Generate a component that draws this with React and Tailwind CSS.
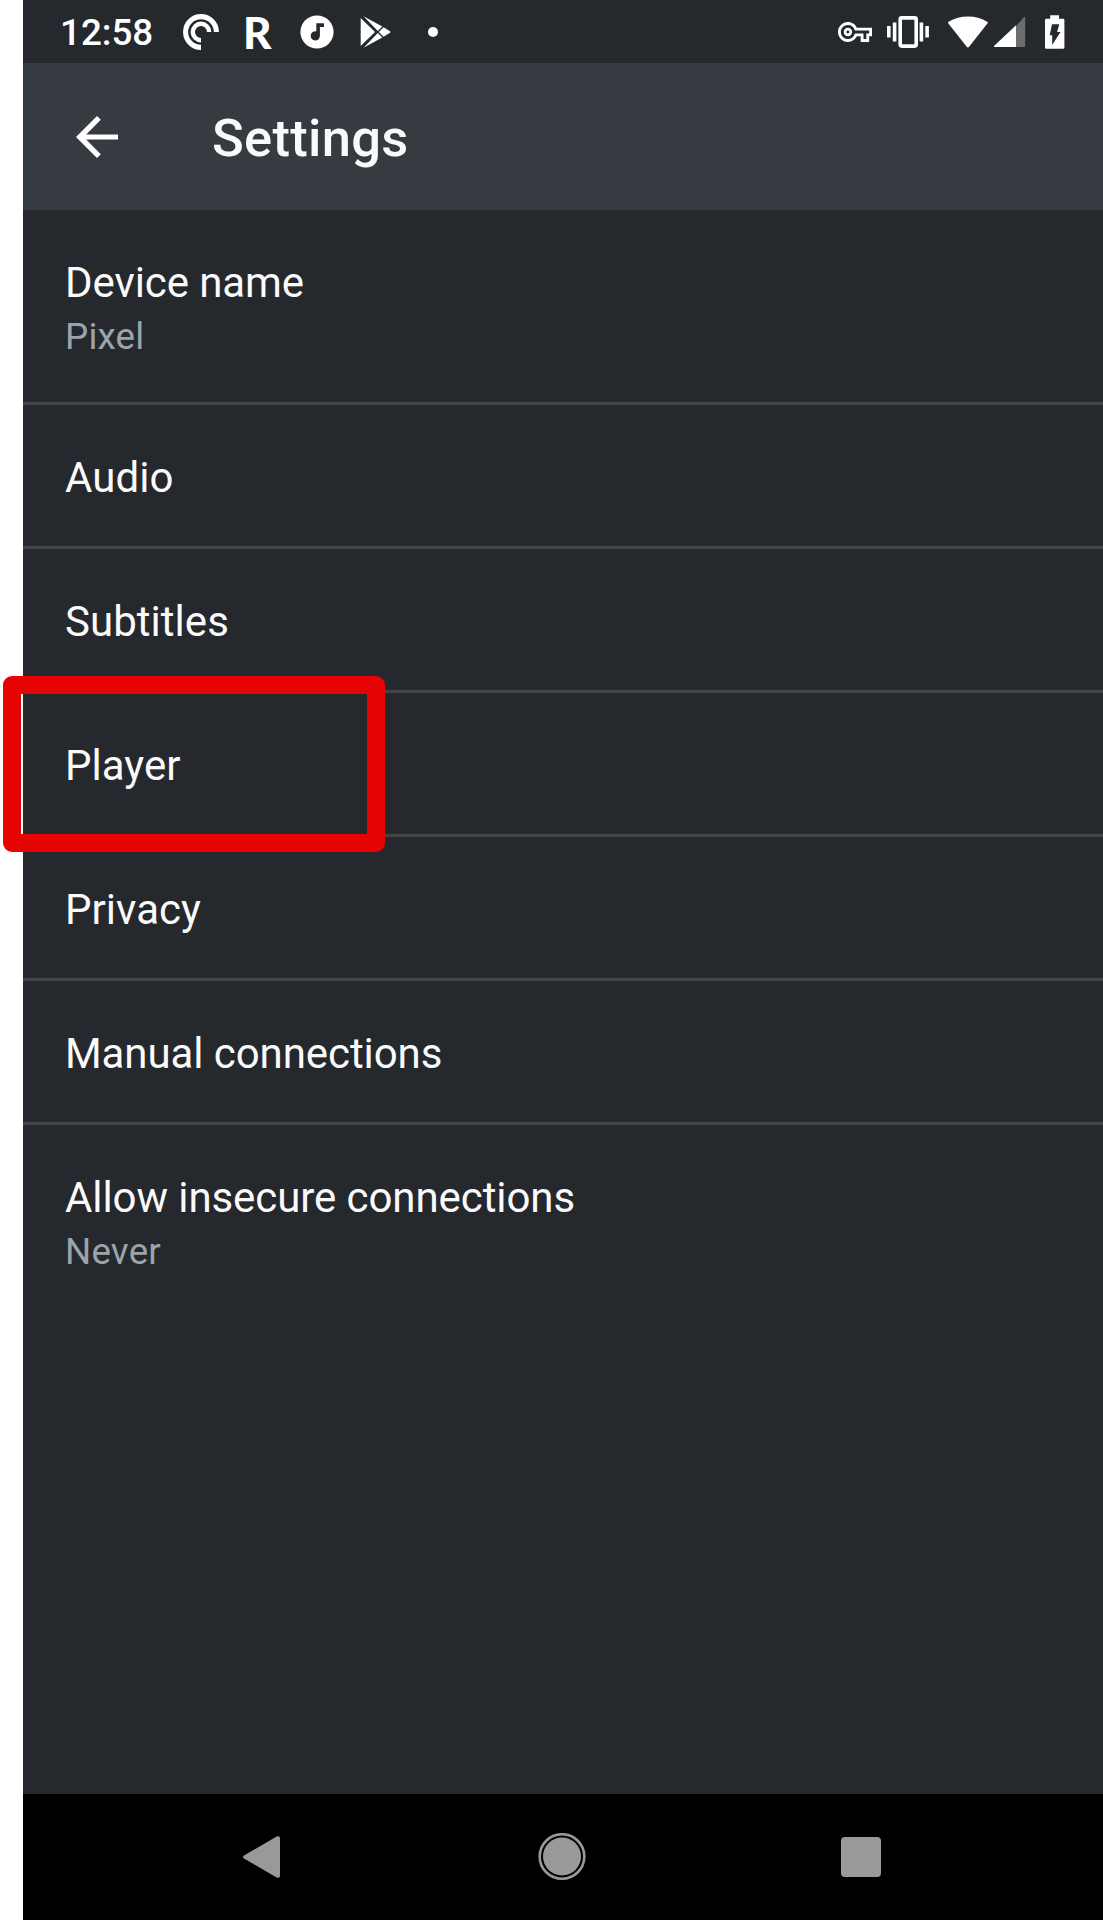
const rows = [
  { title: 'Device name', subtitle: 'Pixel' },
  { title: 'Audio' },
  { title: 'Subtitles' },
  { title: 'Player', highlighted: true },
  { title: 'Privacy' },
  { title: 'Manual connections' },
  { title: 'Allow insecure connections', subtitle: 'Never', last: true },
];

function PocketCastsIcon() {
  return (
    <svg className="ml-[29px] h-[38px] w-[38px] shrink-0" viewBox="0 0 38 38" fill="none" stroke="#fff">
      <path d="M34.4 19A15.4 15.4 0 1 0 19 34.4" strokeWidth="5.1" />
      <path d="M27.2 19A8.2 8.2 0 1 0 19 27.2" strokeWidth="4.4" />
    </svg>
  );
}

function MusicIcon() {
  return (
    <svg className="ml-[25px] h-[34px] w-[34px] shrink-0" viewBox="0 0 34 34">
      <circle cx="17" cy="17" r="16.6" fill="#fff" />
      <path d="M16.3 8.3h7.7v3.6h-4.1v8.9a4.6 4.6 0 1 1-3.6-4.4z" fill="#25282c" />
    </svg>
  );
}

function PlayStoreIcon() {
  return (
    <svg className="ml-[26px] h-[34px] w-[31px] shrink-0" viewBox="0 0 31 34" fill="#fff">
      <path d="M.7 3v28L15 17z" />
      <path d="M3.5 1.2L22.3 11.4l-4.5 4.5z" />
      <path d="M3.5 32.8l18.8-10.2-4.5-4.5z" />
      <path d="M23.5 12.3l6.2 3.6q1.4 1.1 0 2.2l-6.2 3.6L18.8 17z" />
    </svg>
  );
}

function KeyIcon() {
  return (
    <svg className="h-[20px] w-[34px] shrink-0" viewBox="0 5 24 14" fill="#fff">
      <path d="M22 19h-6v-4h-2.68c-1.14 2.42-3.6 4-6.32 4-3.86 0-7-3.14-7-7s3.14-7 7-7c2.72 0 5.17 1.58 6.32 4H24v6h-2v4zm-4-2h2v-4h2v-2H11.94l-.23-.67C11.01 8.34 9.11 7 7 7c-2.76 0-5 2.24-5 5s2.24 5 5 5c2.11 0 4.01-1.34 4.71-3.33l.23-.67H18v4zM7 15c-1.65 0-3-1.35-3-3s1.35-3 3-3 3 1.35 3 3-1.35 3-3 3zm0-4c-.55 0-1 .45-1 1s.45 1 1 1 1-.45 1-1-.45-1-1-1z" />
    </svg>
  );
}

function VibrateIcon() {
  return (
    <svg className="ml-[14px] h-[32px] w-[44px] shrink-0" viewBox="0 0 44 32" fill="#fff">
      <rect x="1" y="10" width="3.6" height="11.5" />
      <rect x="6.8" y="6.5" width="3.6" height="19" />
      <rect x="33.6" y="6.5" width="3.6" height="19" />
      <rect x="39.3" y="10" width="3.6" height="11.5" />
      <rect x="14.2" y="1.9" width="16" height="28.2" rx="1.5" fill="none" stroke="#fff" strokeWidth="3.6" />
    </svg>
  );
}

function WifiIcon() {
  return (
    <svg className="ml-[17px] h-[32px] w-[42px] shrink-0" viewBox="0 0 42 32" fill="#fff">
      <path d="M1.2 7.3Q.5 6.4 1.6 5.7C13-1.3 29-1.3 40.2 5.7Q41.2 6.4 40.6 7.3L22.1 30.7Q20.9 32.2 19.7 30.7z" />
    </svg>
  );
}

function SignalIcon() {
  return (
    <svg className="ml-[5px] h-[32px] w-[32px] shrink-0" viewBox="0 0 32 32">
      <path d="M22 9.8L30 1.2Q31.2.2 31.2 1.8V29.8Q31.2 31 30 31H22z" fill="#6b6d70" />
      <path d="M22 9.2V31H1Q-.8 31 .3 29.7z" fill="#fff" />
    </svg>
  );
}

function BatteryIcon() {
  return (
    <svg className="ml-[19px] h-[34px] w-[20px] shrink-0" viewBox="0 0 20 34">
      <path d="M5.2.2H14V3.7H18Q19.4 3.7 19.4 5.1V32.4Q19.4 33.8 18 33.8H1.4Q0 33.8 0 32.4V5.1Q0 3.7 1.4 3.7H5.2z" fill="#fff" />
      <path d="M7 9.2h7.3l-2.2 7.8h3.4L7.2 30V20.3H4.7z" fill="#25282c" />
    </svg>
  );
}

function StatusBar() {
  return (
    <div className="flex h-[63px] shrink-0 items-center bg-[#25282c] pl-[37px] pr-[38px] text-white">
      <span className="w-[93px] pt-[2px] text-[36.75px] font-medium leading-[43px] whitespace-nowrap">12:58</span>
      <PocketCastsIcon />
      <span className="ml-[23px] w-[32px] font-[Lato] text-[44px] font-black leading-[46px]">R</span>
      <MusicIcon />
      <PlayStoreIcon />
      <span className="ml-[37px] h-[10px] w-[10px] rounded-full bg-white" />
      <div className="ml-auto flex items-center">
        <KeyIcon />
        <VibrateIcon />
        <WifiIcon />
        <SignalIcon />
        <BatteryIcon />
      </div>
    </div>
  );
}

function Header() {
  return (
    <header className="flex h-[147px] shrink-0 items-center bg-[#363a41] pl-[53px]">
      <svg className="h-[42px] w-[42px]" viewBox="0 0 42 42" fill="#fff">
        <path d="M42 18.4H10.2L24.8 3.7 21 0 0 21 21 42l3.8-3.7L10.2 23.6H42z" />
      </svg>
      <h1 className="ml-[94px] pt-[3px] text-[52.5px] font-medium leading-[62px] tracking-[0.3px] text-[#fafafa]">Settings</h1>
    </header>
  );
}

function Row({ title, subtitle, highlighted, last }) {
  return (
    <li
      className={
        'relative pl-[42px] pt-[48px] ' +
        (last ? '' : 'border-b-[3px] border-[#424448] ') +
        (subtitle ? 'h-[195px]' : 'h-[144px]')
      }
    >
      <p
        className={
          'text-[42px] leading-[49px] whitespace-nowrap text-[#fafafa] ' +
          (title.length > 10 ? 'tracking-[-0.08px]' : 'tracking-[0.04px]')
        }
      >
        {title}
      </p>
      {subtitle && (
        <p className="mt-[8px] text-[36.75px] leading-[43px] tracking-[0.2px] text-[#9aa5ab]">{subtitle}</p>
      )}
      {highlighted && (
        <div className="absolute -left-[20px] -top-[17px] h-[176px] w-[382px] rounded-[9px] bg-transparent border-[18px] border-[#e60303]" />
      )}
    </li>
  );
}

function NavBar() {
  return (
    <nav className="flex h-[126px] shrink-0 items-center bg-black text-[#999]">
      <svg className="ml-[219px] h-[44px] w-[39px]" viewBox="0 0 39 44" fill="currentColor">
        <path d="M2 20.6L34.6 1.5Q38 .2 38 3.5V40.5Q38 43.8 34.6 42.5L2 23.4Q0 22 2 20.6z" />
      </svg>
      <svg className="ml-[257px] h-[48px] w-[48px]" viewBox="0 0 48 48">
        <circle cx="24" cy="23.5" r="22.3" fill="none" stroke="currentColor" strokeWidth="2.6" />
        <circle cx="24" cy="23.5" r="19" fill="currentColor" />
      </svg>
      <div className="ml-[255px] h-[40px] w-[40px] rounded-[4px] bg-[#999]" />
    </nav>
  );
}

export default function App() {
  return (
    <div className="h-[1920px] w-[1103px] overflow-hidden bg-white pl-[23px] font-[Roboto,sans-serif]">
      <div className="flex h-full flex-col bg-[#25282c]">
        <StatusBar />
        <Header />
        <ul className="grow">
          {rows.map((row) => (
            <Row key={row.title} {...row} />
          ))}
        </ul>
        <NavBar />
      </div>
    </div>
  );
}
